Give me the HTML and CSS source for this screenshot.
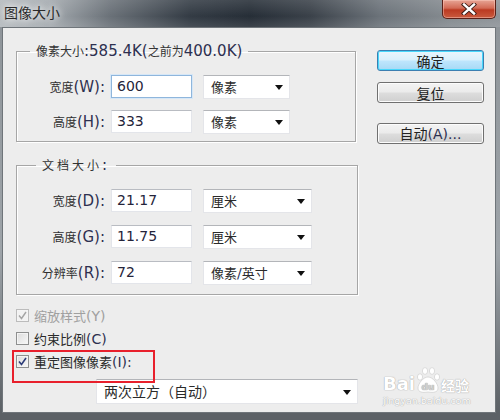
FILE: index.html
```html
<!DOCTYPE html>
<html lang="zh-CN">
  <head>
    <meta charset="UTF-8" />
    <title>图像大小</title>
    <link rel="stylesheet" href="styles.css">
  </head>
  <body>
    <div class="window">
      <div class="titlebar">
        <span class="title">图像大小</span>
        <button class="close">
          <svg width="16" height="12" viewBox="0 0 16 12">
            <path d="M3 1.5 L13 10.5 M13 1.5 L3 10.5" stroke="#3a1a14" stroke-width="4.2" stroke-linecap="square"/>
            <path d="M3 1.5 L13 10.5 M13 1.5 L3 10.5" stroke="#fff" stroke-width="2.4" stroke-linecap="square"/>
          </svg>
        </button>
      </div>

      <div class="client">
        <div class="left">
          <fieldset class="group g1">
            <legend>像素大小<span class="en">:585.4K(</span>之前为<span class="en">400.0K)</span></legend>
            <div class="row">
              <label class="lbl">宽度<span class="en">(W):</span></label>
              <div class="field focus">600</div>
              <div class="select s-short">像素</div>
            </div>
            <div class="row">
              <label class="lbl">高度<span class="en">(H):</span></label>
              <div class="field">333</div>
              <div class="select s-short">像素</div>
            </div>
          </fieldset>

          <fieldset class="group g2">
            <legend>文档大小<span class="en">:</span></legend>
            <div class="row">
              <label class="lbl">宽度<span class="en">(D):</span></label>
              <div class="field">21.17</div>
              <div class="select">厘米</div>
            </div>
            <div class="row">
              <label class="lbl">高度<span class="en">(G):</span></label>
              <div class="field">11.75</div>
              <div class="select">厘米</div>
            </div>
            <div class="row">
              <label class="lbl">分辨率<span class="en">(R):</span></label>
              <div class="field">72</div>
              <div class="select">像素<span class="en">/</span>英寸</div>
            </div>
          </fieldset>

          <div class="checks">
            <div class="check disabled">
              <span class="box on">
                <svg width="9" height="9" viewBox="0 0 9 9"><path d="M1 4.5 L3.5 7.5 L8 1" fill="none" stroke="#a4a4a4" stroke-width="1.4"/></svg>
              </span>
              <span class="txt">缩放样式<span class="en">(Y)</span></span>
            </div>
            <div class="check">
              <span class="box"></span>
              <span class="txt">约束比例<span class="en">(C)</span></span>
            </div>
            <div class="check">
              <span class="box on">
                <svg width="9" height="9" viewBox="0 0 9 9"><path d="M1 4.5 L3.5 7.5 L8 1" fill="none" stroke="#2c3b78" stroke-width="1.6"/></svg>
              </span>
              <span class="txt">重定图像像素<span class="en">(I):</span></span>
            </div>
          </div>

          <div class="select s-wide">两次立方（自动）</div>
        </div>

        <div class="buttons">
          <button class="btn default">确定</button>
          <button class="btn">复位</button>
          <button class="btn auto">自动<span class="en">(A)...</span></button>
        </div>

        <div class="mark"></div>

        <div class="watermark">
          <div class="wm-top">
            <span class="wm-bai">Bai</span>
            <svg class="paw" width="24" height="28" viewBox="0 0 24 28">
              <ellipse cx="4" cy="11" rx="2.6" ry="3.2" fill="#fff" stroke="#c8c8c8" stroke-width="0.6"/>
              <ellipse cx="9" cy="5" rx="2.6" ry="3.4" fill="#fff" stroke="#c8c8c8" stroke-width="0.6"/>
              <ellipse cx="16" cy="5" rx="2.6" ry="3.4" fill="#fff" stroke="#c8c8c8" stroke-width="0.6"/>
              <ellipse cx="21" cy="11" rx="2.6" ry="3.2" fill="#fff" stroke="#c8c8c8" stroke-width="0.6"/>
              <path d="M12 11 C7 11 2 18 2 22 C2 26 6 27 12 26 C18 27 22 26 22 22 C22 18 17 11 12 11 Z" fill="#fff" stroke="#c8c8c8" stroke-width="0.6"/>
              <text x="12" y="24" text-anchor="middle" font-family="DejaVu Sans, sans-serif" font-size="9" font-weight="bold" fill="#d0d0d0">du</text>
            </svg>
            <span class="wm-jy">经验</span>
          </div>
          <div class="wm-url">jingyan.baidu.com</div>
        </div>
      </div>
    </div>
  </body>
</html>
```

FILE: styles.css
```css
* {
  box-sizing: border-box;
}

html,
body {
  margin: 0;
  padding: 0;
}

body {
  width: 500px;
  height: 420px;
  overflow: hidden;
  background: #9ba1a6;
  font-family: "Noto Sans CJK SC", sans-serif;
  font-size: 12px;
  color: #303030;
}

.en {
  font-family: "DejaVu Sans", "Noto Sans CJK SC", sans-serif;
  font-size: 15px;
  color: #2d3050;
}

.window {
  width: 500px;
  height: 420px;
  display: flex;
  flex-direction: column;
  background: linear-gradient(#8d9398, #9ea4a9 60%, #5c6166 98%);
}

/* title bar */

.titlebar {
  height: 27px;
  display: flex;
  justify-content: space-between;
  align-items: flex-start;
  background:
    linear-gradient(rgba(255, 255, 255, 0.12), rgba(255, 255, 255, 0) 60%, rgba(255, 255, 255, 0.1)),
    linear-gradient(to right, #b4b9bd 0%, #a3a9ae 10%, #6a7178 22%, #333b44 38%, #262e37 50%, #3a4149 62%, #6b7279 76%, #858b90 90%, #8e9499 100%);
}

.title {
  margin: 3px 0 0 4px;
  font-size: 14px;
  line-height: 18px;
  color: #2a2a2a;
  text-shadow: 0 0 6px #fff, 0 0 10px rgba(255, 255, 255, 0.8);
}

.close {
  width: 54px;
  height: 19px;
  margin-right: 4px;
  padding: 0;
  border: 1px solid #5a2018;
  border-top: none;
  border-radius: 0 0 5px 5px;
  background: linear-gradient(#e7a595, #d26a55 45%, #bb3a22 55%, #c95a3e);
  box-shadow: inset 0 0 0 1px rgba(255, 210, 200, 0.45);
  display: flex;
  justify-content: center;
  align-items: center;
}

/* dialog body */

.client {
  position: relative;
  height: 386px;
  margin: 0 4px 0 2px;
  display: flex;
  align-items: flex-start;
  background: #ededed;
  border: 1px solid #6f757a;
}

.left {
  margin-left: 13px;
  padding-top: 15px;
  display: flex;
  flex-direction: column;
}

.group {
  margin: 0;
  padding: 16px 0 8px 0;
  border: 1px solid #a6a6a6;
  box-shadow: 1px 1px 0 #fff, inset 1px 1px 0 #fff;
  min-width: 0;
  display: flex;
  flex-direction: column;
  gap: 12px;
}

.group legend {
  padding: 0 6px;
  line-height: 16px;
  color: #333;
}

.g1 {
  width: 340px;
}

.g1 legend {
  margin-left: 13px;
}

.g2 {
  width: 342px;
  margin-top: 15px;
  padding-bottom: 10px;
  gap: 13px;
}

.g2 legend {
  margin-left: 19px;
  letter-spacing: 3px;
}

.row {
  display: flex;
  align-items: center;
  height: 23px;
}

.lbl {
  width: 88px;
  margin-right: 6px;
  text-align: right;
  line-height: 23px;
}

.field {
  width: 81px;
  height: 23px;
  padding-left: 5px;
  background: #fff;
  border: 1px solid #e3e5ea;
  border-top-color: #b9bcc2;
  font-family: "DejaVu Sans", sans-serif;
  font-size: 14px;
  line-height: 21px;
  color: #24243a;
}

.field.focus {
  border-color: #8fb6dc;
  box-shadow: 0 0 0 1px #d6e7f7;
}

.select {
  position: relative;
  width: 109px;
  height: 24px;
  margin-left: 11px;
  padding-left: 7px;
  background: #fff;
  border: 1px solid #e4e5e9;
  border-top-color: #b3b5b9;
  font-size: 13px;
  line-height: 22px;
  color: #2a2a2a;
}

.select .en {
  font-size: 14px;
  color: #2a3560;
}

.select::after {
  content: "";
  position: absolute;
  right: 6px;
  top: 9px;
  border-left: 4px solid transparent;
  border-right: 4px solid transparent;
  border-top: 5px solid #111;
}

.s-short {
  width: 87px;
}

/* checkboxes */

.checks {
  margin-top: 9px;
  display: flex;
  flex-direction: column;
}

.check {
  height: 23px;
  display: flex;
  align-items: center;
  gap: 5px;
  font-size: 13px;
  color: #2a2a2a;
}

.check .en {
  font-size: 14px;
}

.check.disabled,
.check.disabled .en {
  color: #a0a0a0;
}

.box {
  width: 13px;
  height: 13px;
  border: 1px solid #8e8f8f;
  background: linear-gradient(135deg, #dcdcdc, #f8f8f8);
  box-shadow: inset 0 0 0 1px #f4f4f4;
  display: flex;
  justify-content: center;
  align-items: center;
}

.check.disabled .box {
  border-color: #bcbcbc;
  background: #f2f2f2;
}

.s-wide {
  width: 262px;
  height: 25px;
  margin: 6px 0 0 80px;
  font-size: 14px;
  line-height: 23px;
}

.s-wide::after {
  top: 10px;
}

/* buttons */

.buttons {
  margin: 22px 0 0 19px;
  display: flex;
  flex-direction: column;
}

.btn {
  width: 107px;
  height: 21px;
  padding: 0;
  border: 1px solid #707070;
  border-radius: 3px;
  background: linear-gradient(#f3f3f3, #ebebeb 48%, #dddddd 52%, #cfcfcf);
  box-shadow: inset 0 0 0 1px #fcfcfc;
  font-family: "Noto Sans CJK SC", sans-serif;
  font-size: 14px;
  line-height: 18px;
  color: #222;
}

.btn + .btn {
  margin-top: 11px;
}

.btn.default {
  border-color: #3c7fb1;
  background: linear-gradient(#eaf6fd, #d9f0fc 48%, #bee6fd 52%, #a7d9f5);
  box-shadow: inset 0 0 0 1px #48d7fb;
}

.btn.auto {
  margin-top: 20px;
}

.btn .en {
  font-size: 14px;
  color: #2d3050;
}

/* annotation */

.mark {
  position: absolute;
  left: 9px;
  top: 322px;
  width: 143px;
  height: 33px;
  border: 2px solid #e8202c;
}

.watermark {
  position: absolute;
  left: 380px;
  top: 336px;
  width: 92px;
  color: #fff;
  text-shadow: 0 0 1px #a8a8a8, 0 0 1px #a8a8a8;
}

.wm-top {
  display: flex;
  align-items: flex-end;
  height: 30px;
}

.wm-bai {
  font-family: "DejaVu Sans", sans-serif;
  font-size: 18px;
  font-weight: bold;
  line-height: 20px;
}

.paw {
  margin: 0 1px 0 1px;
}

.wm-jy {
  font-size: 14px;
  line-height: 18px;
  font-weight: bold;
}

.wm-url {
  margin-top: 1px;
  font-family: "DejaVu Sans", sans-serif;
  font-size: 9.5px;
  line-height: 11px;
}
```
